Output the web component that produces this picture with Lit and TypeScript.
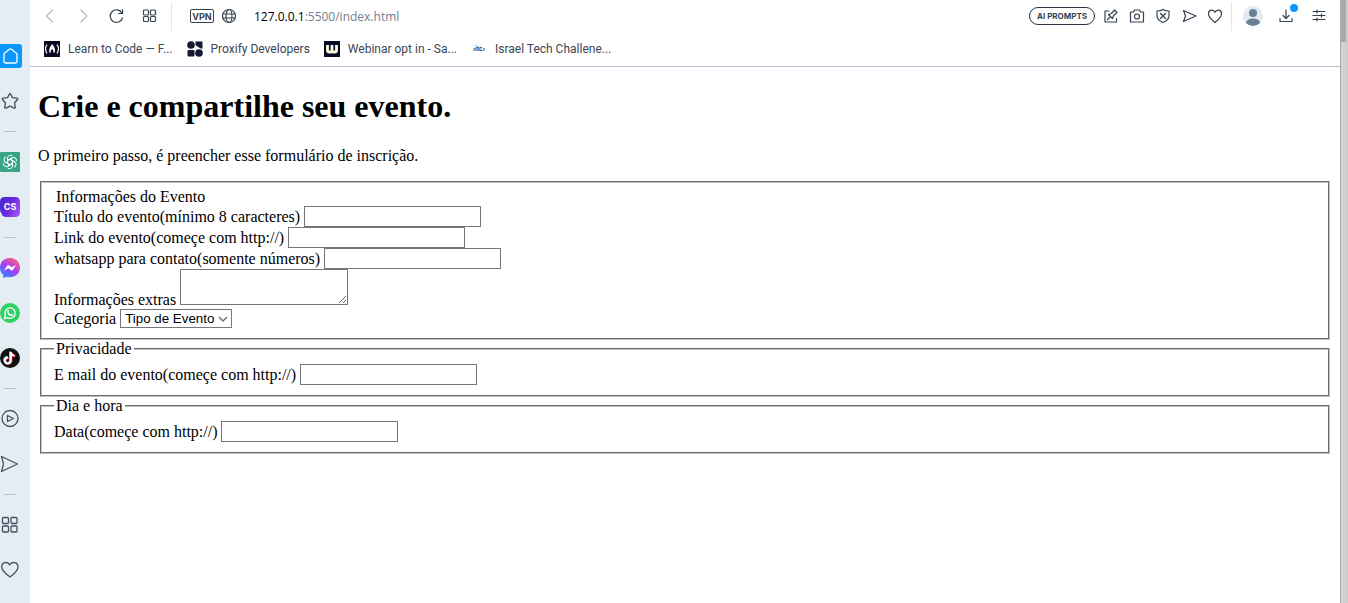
import { LitElement, html, css, svg } from "lit";
import { customElement } from "lit/decorators.js";

const icon = (size: number, body: unknown, cls = "line") =>
  html`<svg class=${cls} width=${size} height=${size} viewBox="0 0 ${size} ${size}" aria-hidden="true">${body}</svg>`;

const heart = (s: number) =>
  icon(s, s > 16
    ? svg`<path d="M9 16 C6 13.500 .7 10.500 .7 5.800 C.7 1 7 0 8.700 4 C10.500 0 17 1 17 5.800 C17 10.500 12 13.500 9 16Z"/>`
    : svg`<path d="M8 14.500 C5 12 1.500 9.500 1.500 5.800 C1.500 1.500 6.500 1 8 4.300 C9.500 1 14.500 1.500 14.500 5.800 C14.500 9.500 11 12 8 14.500Z"/>`);
const grid = (s: number) => {
  const w = s > 16 ? 6 : 5;
  const o = s > 16 ? 10 : 8.5;
  const y = s > 16 ? 1.5 : 2;
  return icon(s, svg`
    <rect x="1.500" y=${y} width=${w} height=${w} rx="1"/><rect x=${o} y=${y} width=${w} height=${w} rx="1"/>
    <rect x="1.500" y=${o} width=${w} height=${w} rx="1"/><rect x=${o} y=${o} width=${w} height=${w} rx="1"/>`);
};

@customElement("side-bar")
class SideBar extends LitElement {
  static styles = css`
    :host { display: block; background: #e4ecf4; overflow: hidden; }
    nav { display: flex; flex-direction: column; align-items: flex-start; padding-top: 44px; }
    button { display: flex; align-items: center; justify-content: center; flex: none; width: 20px; height: 24px; padding: 0; border: 0; background: none; color: #44505e; }
    .home { width: 22px; background: #0a98ff; color: #fff; border-radius: 0 3px 3px 0; }
    .line { fill: none; stroke: currentColor; stroke-width: 1.3; stroke-linejoin: round; stroke-linecap: round; }
    .art { display: block; }
    .space { margin-top: 21px; }
    hr { width: 12px; height: 1px; margin: 18px 0 18px 4px; border: 0; background: #b0c3d6; flex: none; }
    .mark { font: bold 9px "Inter", sans-serif; fill: #fff; }
  `;
  render() {
    return html`<nav aria-label="Sidebar">
      <button class="home" aria-label="Home">${icon(20, svg`<path d="M3 8.500 Q3 7.500 3.800 6.900 L8.300 3.300 Q9.300 2.500 10.300 3.300 L15.200 6.900 Q16 7.500 16 8.500 V15 Q16 17 14 17 H5 Q3 17 3 15Z"/>`)}</button>
      <button class="space" aria-label="Pinboards">${icon(18, svg`<path d="M9 1.500 Q9.500 1.500 11.500 5.700 L16 6.200 Q17.300 6.500 16.400 7.500 L13.500 11 L14.300 15.200 Q14.300 16.500 13.200 16.100 L9 14.200 L4.800 16.100 Q3.700 16.500 3.700 15.200 L4.500 11 L1.600 7.500 Q.7 6.500 2 6.200 L6.500 5.700 Q8.500 1.500 9 1.500Z"/>`)}</button>
      <hr />
      <button aria-label="ChatGPT">${icon(20, svg`<rect width="20" height="20" rx="1" fill="#35a583"/>
        <g fill="none" stroke="#fff" stroke-width="1">${[0, 60, 120, 180, 240, 300].map(
          (a) => svg`<path transform="rotate(${a} 10 10)" d="M7.500 11.300 V6 A3 3 0 0 1 12.500 4 M7.500 8.700 L10.200 7.200 L14.800 9.800"/>`)}</g>`, "art")}</button>
      <button class="space" aria-label="ChatSonic">${icon(20, svg`<defs><linearGradient id="cs" x2="1" y2=".6"><stop stop-color="#3b25cf"/><stop offset=".6" stop-color="#6b2be0"/><stop offset="1" stop-color="#9a4cf4"/></linearGradient></defs>
        <path fill="url(#cs)" d="M5 0 H15 Q20 0 20 5 V15 Q20 20 15 20 H6 Q2 20 1.500 16 Q0 15 0 12 V5 Q0 0 5 0Z"/><text class="mark" x="10" y="13" text-anchor="middle">CS</text>`, "art")}</button>
      <hr />
      <button aria-label="Messenger">${icon(20, svg`<defs><linearGradient id="ms" x1=".1" y1="1" x2=".8" y2="0"><stop stop-color="#0a9cff"/><stop offset=".5" stop-color="#a33cfa"/><stop offset="1" stop-color="#ff6375"/></linearGradient></defs>
        <path fill="url(#ms)" d="M10 0 C4 0 0 4.300 0 9.700 C0 12.600 1.200 15 3.200 16.800 L3.300 20 L6.200 18.700 C13 20.700 20 16.600 20 9.700 C20 4.300 16 0 10 0Z"/><path fill="#fff" d="M4 12.500 L7 7.800 Q8 6.500 9.300 7.500 L11.500 9.200 L16 7 L13 11.700 Q12 13 10.700 12 L8.500 10.300Z"/>`, "art")}</button>
      <button class="space" aria-label="WhatsApp">${icon(20, svg`<circle cx="10" cy="10" r="10" fill="#30d264"/><path fill="none" stroke="#fff" stroke-width="1.300" d="M4.500 15.500 L5.400 12.400 A5.200 5.200 0 1 1 7.500 14.600Z"/><path fill="#fff" d="M7.500 7.200 Q8.300 6.500 8.700 7.500 L9 8.500 L8.500 9.300 Q9.300 10.900 10.900 11.500 L11.600 10.800 L13 11.500 Q13 13.200 11.500 13.200 Q7.500 12.500 7 9 Q7 8 7.500 7.200Z"/>`, "art")}</button>
      <button class="space" aria-label="TikTok">${icon(20, svg`<circle cx="10" cy="10" r="10" fill="#111"/><g fill="none" stroke-width="2"><path stroke="#25f4ee" d="M10.100 3.500 V12 A3 3 0 1 1 7.300 9 M10.100 3.500 Q10.400 6.700 13.900 7.200"/><path stroke="#fe2c55" d="M11.500 4.500 V13 A3 3 0 1 1 8.700 10 M11.500 4.500 Q11.800 7.700 15.300 8.200"/><path stroke="#fff" d="M10.800 4 V12.500 A3 3 0 1 1 8 9.500 M10.800 4 Q11.100 7.200 14.600 7.700"/></g>`, "art")}</button>
      <hr />
      <button aria-label="Player">${icon(18, svg`<circle cx="9" cy="8.500" r="8"/><path d="M6.500 5.500 L12.500 8.500 L6.500 11.500Z"/>`)}</button>
      <button class="space" aria-label="My Flow">${icon(20, svg`<path d="M1.500 2.500 L17.500 10 L1.500 17.500 L3.500 10Z"/>`)}</button>
      <hr />
      <button aria-label="Speed Dial">${grid(18)}</button>
      <button class="space" aria-label="Favorites">${heart(18)}</button>
    </nav>`;
  }
}

@customElement("tool-bar")
class ToolBar extends LitElement {
  static styles = css`
    :host { display: block; border-bottom: 1px solid #b0c0d2; font-family: "Open Sans", "Noto Sans", sans-serif; }
    button { display: flex; align-items: center; justify-content: center; padding: 0; border: 0; background: none; color: #36424f; }
    .line { fill: none; stroke: currentColor; stroke-width: 1.2; stroke-linejoin: round; stroke-linecap: round; }
    .row { display: flex; align-items: center; height: 32px; }
    .nav { display: flex; gap: 17px; padding: 0 13px; }
    .muted { color: #b5b5b5; }
    .sep { width: 1px; height: 29px; background: #e2e6ea; }
    .vpn { box-sizing: border-box; width: 24px; height: 14px; margin: 0 7px 0 18px; border: 1px solid #36424f; border-radius: 2px; font: bold 9px "Inter", sans-serif; }
    .url { flex: 1; min-width: 0; margin: 0; padding-left: 17px; font-size: 12px; color: #000; white-space: nowrap; }
    .path { color: #71808f; }
    .tools { display: flex; align-items: center; gap: 10px; padding-right: 8px; }
    .prompts { box-sizing: border-box; width: 66px; height: 18px; margin-right: -2px; border: 1px solid #263442; border-radius: 9px; font: bold 8px "Inter", sans-serif; }
    .account { display: flex; align-items: center; gap: 16px; padding: 0 13px 0 11px; }
    .download { position: relative; }
    .dot { position: absolute; top: -4px; right: -3px; width: 8px; height: 8px; border-radius: 50%; background: #0a98ff; }
    .marks { display: flex; align-items: center; gap: 14px; height: 34px; padding-left: 14px; box-sizing: border-box; font-family: Roboto, sans-serif; }
    .marks a { display: flex; align-items: center; gap: 8px; color: #3c4654; font-size: 12px; text-decoration: none; white-space: nowrap; }
    .itc { font: bold 6px "Inter", sans-serif; fill: #333; }
  `;
  render() {
    return html`
      <div class="row">
        <div class="nav">
          <button class="muted" aria-label="Back">${icon(16, svg`<path d="M9.500 2 L3.500 8 L9.500 14"/>`)}</button>
          <button class="muted" aria-label="Forward">${icon(16, svg`<path d="M5 2 L11 8 L5 14"/>`)}</button>
          <button aria-label="Reload">${icon(16, svg`<path d="M13.500 10 A6.300 6.300 0 1 1 13 5 M13.500 1.500 V5.500 H9.500"/>`)}</button>
          <button aria-label="Tabs">${grid(16)}</button>
        </div>
        <span class="sep"></span>
        <button class="vpn">VPN</button>
        <button aria-label="Site information">${icon(16, svg`<circle cx="8" cy="8" r="6.500"/><ellipse cx="8" cy="8" rx="3" ry="6.500"/><path d="M2 6 H14 M2 10 H14"/>`)}</button>
        <p class="url">127.0.0.1<span class="path">:5500/index.html</span></p>
        <div class="tools">
          <button class="prompts">AI PROMPTS</button>
          <button aria-label="Pin">${icon(16, svg`<path d="M6 3 H2 V14 H13.500 V10.500 M4.500 11.500 L7.500 8.500 M5.500 6.500 L9.500 10.500 L10.500 7.500 L14 4.500 L11.500 2 L8.500 5.500Z"/>`)}</button>
          <button aria-label="Snapshot">${icon(16, svg`<path d="M1.500 4 H4.500 L5.500 2 H10.500 L11.500 4 H14.500 V14 H1.500Z"/><circle cx="8" cy="8.500" r="2.500"/>`)}</button>
          <button aria-label="Blocker">${icon(16, svg`<path d="M8 1.500 Q10 3 14 3 V8 Q14 12 8 14.500 Q2 12 2 8 V3 Q6 3 8 1.500Z M5.500 5.500 L10.500 10.500 M10.500 5.500 L5.500 10.500"/>`)}</button>
          <button aria-label="Send">${icon(16, svg`<path d="M2.500 2.500 L15 8 L2.500 13.500 L4.500 8Z"/>`)}</button>
          <button aria-label="Bookmark">${heart(16)}</button>
        </div>
        <span class="sep"></span>
        <div class="account">
          <button aria-label="Profile">${icon(20, svg`<clipPath id="p"><circle cx="10" cy="10" r="10"/></clipPath><circle cx="10" cy="10" r="10" fill="#e2ebf3"/><g clip-path="url(#p)" fill="#6b7f94"><circle cx="10" cy="7" r="4"/><ellipse cx="10" cy="17" rx="7" ry="4.500"/></g>`, "art")}</button>
          <button class="download" aria-label="Downloads">${icon(16, svg`<path d="M1 10.500 V13.500 H13 V10.500 M7 2 V10.500 M4 7.500 L7 10.500 L10 7.500"/>`)}<span class="dot"></span></button>
          <button aria-label="Easy setup">${icon(16, svg`<path d="M2 3.500 H14 M2 7.500 H14 M2 11.500 H14 M6 2 V5 M10.500 6 V9 M6 10 V13"/>`)}</button>
        </div>
      </div>
      <div class="marks">
        <a href="#">${icon(16, svg`<rect width="16" height="16" fill="#0a0a23"/><path fill="none" stroke="#fff" stroke-width="1.200" d="M3 3.500 Q0 8 3 12.500 M13 3.500 Q16 8 13 12.500"/><path fill="#fff" d="M8 3 Q11.500 6.500 11 11 L9.500 12 Q10 9.500 8.300 8 Q6 9.500 6.500 12 L5 11 Q5 6.500 8 3Z"/>`, "art")}Learn to Code — F...</a>
        <a href="#">${icon(16, svg`<g fill="#151832"><circle cx="4" cy="4" r="3.800"/><path d="M8.500 .5 H15.500 V7.500 Q14 8 12 6.500 L8.500 4Z"/><rect x=".5" y="9" width="7" height="6.500" rx="1"/><circle cx="12" cy="12" r="3.800"/></g>`, "art")}Proxify Developers</a>
        <a href="#">${icon(16, svg`<rect width="16" height="16" fill="#070b25"/><path fill="none" stroke="#fffde0" stroke-width="2.800" d="M3.500 4 V9.500 Q3.500 11 5.500 11 H6.500 Q8 11 8 9.500 V4 M8 9.500 Q8 11 9.500 11 H10.500 Q12.500 11 12.500 9.500 V4"/>`, "art")}Webinar opt in - Sa...</a>
        <a href="#">${icon(16, svg`<text class="itc" x="8" y="10" text-anchor="middle">‹itc›</text>`, "art")}Israel Tech Challene...</a>
      </div>`;
  }
}

@customElement("event-form")
class EventForm extends LitElement {
  static styles = css`
    :host { display: block; padding: 0 8px; font: 16px/18px "Liberation Serif", "Times New Roman", serif; color: #000; }
    h1 { margin: 21px 0 22px; font-size: 32px; line-height: 37px; }
    p { margin: 0 0 16px; }
    fieldset { margin: 0 2px; padding: 5px 12px 10px; border: 2px groove #c0c0c0; min-width: 0; }
    legend { margin-bottom: 1px; padding: 0 2px; }
    .title { padding: 0 2px; }
    .field { display: flex; align-items: center; gap: 4px; }
    .tall { align-items: flex-end; height: 40px; box-sizing: border-box; }
    input, textarea, select { box-sizing: border-box; margin: 0; border: 1px solid #767676; border-radius: 0; background: #fff; color: #000; font-family: "Liberation Sans", Arial, sans-serif; }
    input { width: 177px; height: 21px; padding: 1px 2px; }
    textarea { width: 168px; height: 36px; padding: 2px; align-self: flex-start; }
    select { width: 112px; height: 19px; padding: 0 4px; appearance: none; background: #fff url("data:image/svg+xml,%3Csvg xmlns='http://www.w3.org/2000/svg' width='10' height='6'%3E%3Cpath d='M1 1l4 4 4-4' fill='none' stroke='%23767676' stroke-width='1.5'/%3E%3C/svg%3E") no-repeat right 3px center; }
  `;
  render() {
    const field = (id: string, label: string, type = "text") => html`
      <div class="field"><label for=${id}>${label}</label><input id=${id} type=${type} /></div>`;
    return html`
      <h1>Crie e compartilhe seu evento.</h1>
      <p>O primeiro passo, é preencher esse formulário de inscrição.</p>
      <form>
        <fieldset aria-labelledby="info">
          <div class="title" id="info">Informações do Evento</div>
          ${field("titulo", "Título do evento(mínimo 8 caracteres)")}
          ${field("link", "Link do evento(começe com http://)", "url")}
          ${field("whatsapp", "whatsapp para contato(somente números)")}
          <div class="field tall"><label for="extras">Informações extras</label><textarea id="extras"></textarea></div>
          <div class="field"><label for="categoria">Categoria</label><select id="categoria"><option>Tipo de Evento</option></select></div>
        </fieldset>
        <fieldset>
          <legend>Privacidade</legend>
          ${field("email", "E mail do evento(começe com http://)")}
        </fieldset>
        <fieldset>
          <legend>Dia e hora</legend>
          ${field("data", "Data(começe com http://)")}
        </fieldset>
      </form>`;
  }
}

@customElement("app-root")
class AppRoot extends LitElement {
  static styles = css`
    :host { display: grid; grid-template-columns: 30px minmax(0, 1fr) 8px; min-height: 100vh; background: #fff; }
    .scroll { box-sizing: border-box; border-left: 1px solid #a9a9a9; background: linear-gradient(90deg, #d6d6d6, #cbcbcb); }
    .thumb { width: 5px; height: 42px; background: #aaa; }
  `;
  render() {
    return html`
      <side-bar></side-bar>
      <main><tool-bar></tool-bar><event-form></event-form></main>
      <div class="scroll"><div class="thumb"></div></div>`;
  }
}
